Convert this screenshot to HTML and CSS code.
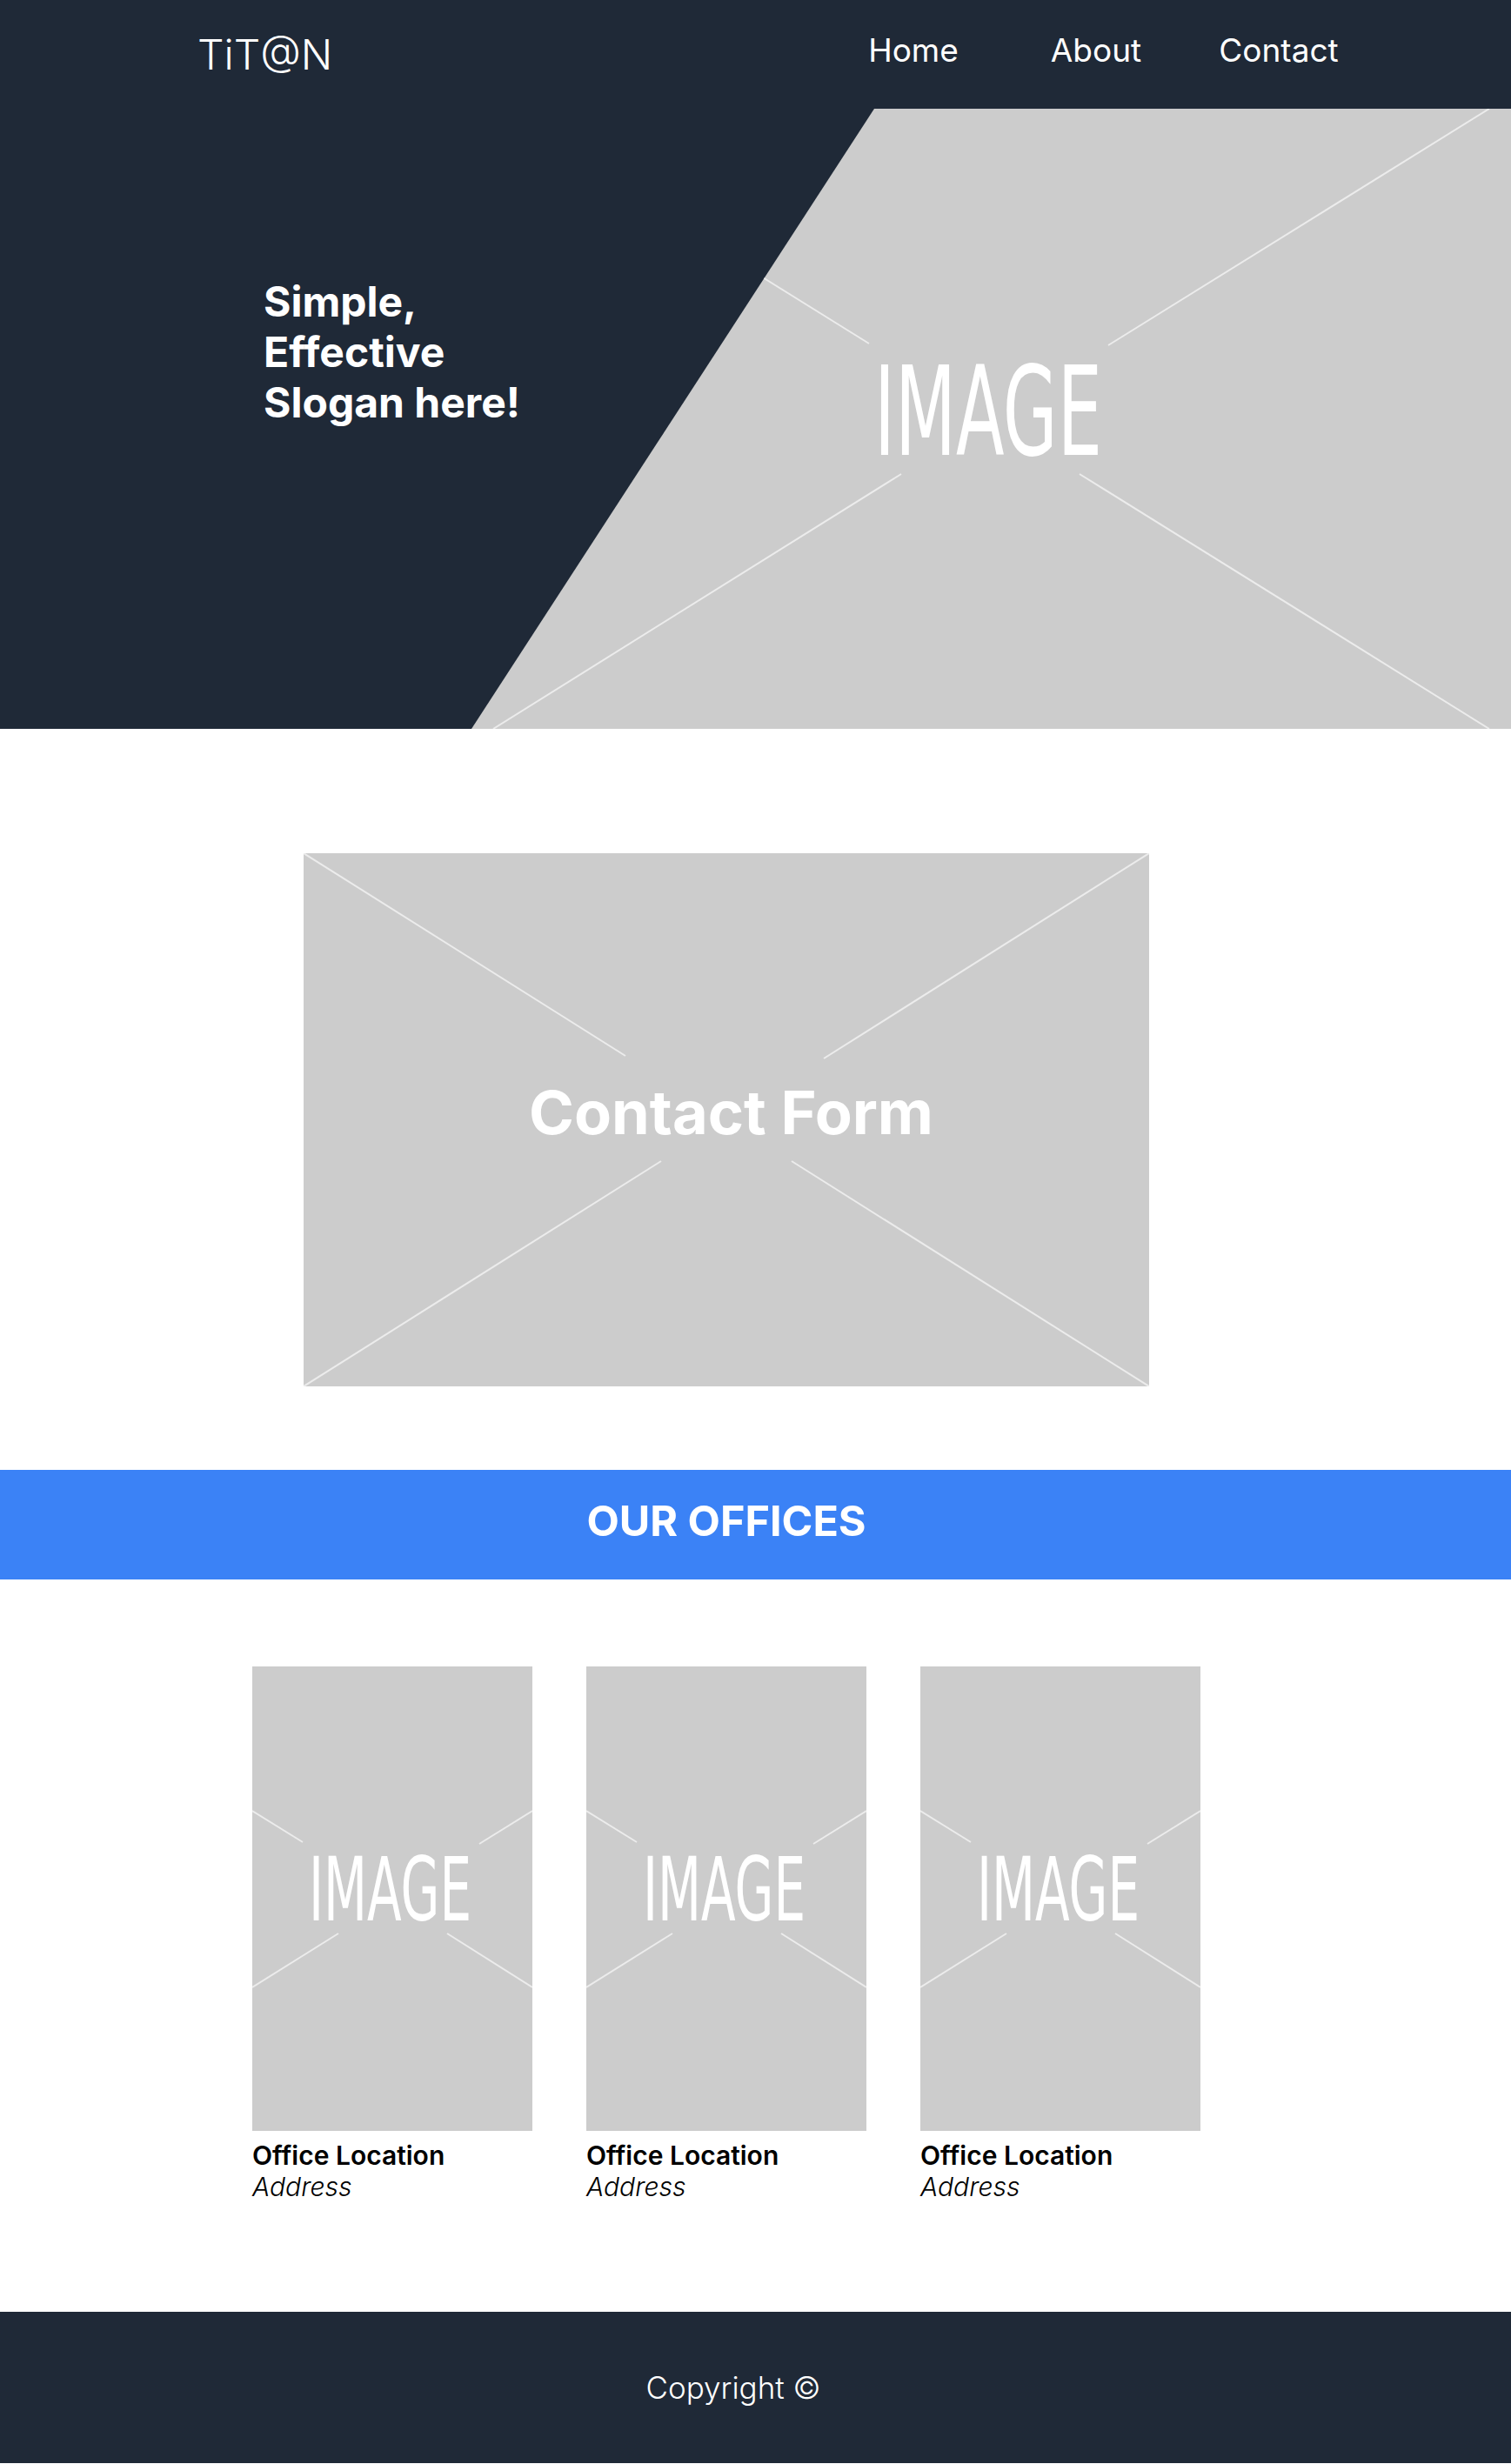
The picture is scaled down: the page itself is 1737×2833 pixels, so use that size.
FILE: index.html
```html
<!DOCTYPE html>
<html lang="en">
<head>
    <meta charset="UTF-8">
    <meta name="viewport" content="width=device-width, initial-scale=1.0">
    <title>TiT@N - Contact</title>
    <link rel="stylesheet" href="styles.css">
</head>
<body>
    <header class="topbar">
        <div class="logo">TiT@N</div>
        <nav class="nav">
            <a href="#">Home</a>
            <a href="#">About</a>
            <a href="#">Contact</a>
        </nav>
    </header>

    <section class="hero">
        <svg class="hero-art" width="1737" height="713" viewBox="0 0 1737 713">
            <defs>
                <clipPath id="heroClip">
                    <polygon points="1005,0 1737,0 1737,713 542,713" />
                </clipPath>
            </defs>
            <g clip-path="url(#heroClip)">
                <rect x="0" y="0" width="1737" height="713" class="ph-fill" />
                <line x1="565" y1="0" x2="999" y2="270" class="ph-line" />
                <line x1="1241" y1="420" x2="1712" y2="713" class="ph-line" />
                <line x1="1712" y1="0" x2="1274" y2="272" class="ph-line" />
                <line x1="1036" y1="420" x2="567" y2="713" class="ph-line" />
                <text transform="translate(1005 398) scale(1 1.47)" class="ph-word" font-size="97" textLength="262" lengthAdjust="spacingAndGlyphs">IMAGE</text>
            </g>
        </svg>
        <h1 class="slogan">Simple,<br>Effective<br>Slogan here!</h1>
    </section>

    <section class="contact wrap">
        <svg class="contact-form" width="972" height="613" viewBox="0 0 972 613">
            <rect x="0" y="0" width="972" height="613" class="ph-fill" />
            <line x1="0" y1="0" x2="370" y2="233" class="ph-line" />
            <line x1="561" y1="354" x2="972" y2="613" class="ph-line" />
            <line x1="972" y1="0" x2="598" y2="236" class="ph-line" />
            <line x1="411" y1="354" x2="0" y2="613" class="ph-line" />
            <text x="259" y="323" class="ph-title" font-size="69" textLength="465" lengthAdjust="spacingAndGlyphs">Contact Form</text>
        </svg>
    </section>

    <div class="band">
        <h2 class="band-title wrap">OUR OFFICES</h2>
    </div>

    <section class="offices wrap">
        <div class="office">
            <svg class="office-img" width="322" height="534" viewBox="0 0 322 534">
                <rect x="0" y="0" width="322" height="534" class="ph-fill" />
                <line x1="0" y1="166" x2="58" y2="202" class="ph-line" />
                <line x1="224" y1="307" x2="322" y2="369" class="ph-line" />
                <line x1="322" y1="166" x2="261" y2="204" class="ph-line" />
                <line x1="99" y1="307" x2="0" y2="369" class="ph-line" />
                <text transform="translate(65 292) scale(1 1.47)" class="ph-word" font-size="69" textLength="187" lengthAdjust="spacingAndGlyphs">IMAGE</text>
            </svg>
            <div class="office-name">Office Location</div>
            <div class="office-addr">Address</div>
        </div>
        <div class="office">
            <svg class="office-img" width="322" height="534" viewBox="0 0 322 534">
                <rect x="0" y="0" width="322" height="534" class="ph-fill" />
                <line x1="0" y1="166" x2="58" y2="202" class="ph-line" />
                <line x1="224" y1="307" x2="322" y2="369" class="ph-line" />
                <line x1="322" y1="166" x2="261" y2="204" class="ph-line" />
                <line x1="99" y1="307" x2="0" y2="369" class="ph-line" />
                <text transform="translate(65 292) scale(1 1.47)" class="ph-word" font-size="69" textLength="187" lengthAdjust="spacingAndGlyphs">IMAGE</text>
            </svg>
            <div class="office-name">Office Location</div>
            <div class="office-addr">Address</div>
        </div>
        <div class="office">
            <svg class="office-img" width="322" height="534" viewBox="0 0 322 534">
                <rect x="0" y="0" width="322" height="534" class="ph-fill" />
                <line x1="0" y1="166" x2="58" y2="202" class="ph-line" />
                <line x1="224" y1="307" x2="322" y2="369" class="ph-line" />
                <line x1="322" y1="166" x2="261" y2="204" class="ph-line" />
                <line x1="99" y1="307" x2="0" y2="369" class="ph-line" />
                <text transform="translate(65 292) scale(1 1.47)" class="ph-word" font-size="69" textLength="187" lengthAdjust="spacingAndGlyphs">IMAGE</text>
            </svg>
            <div class="office-name">Office Location</div>
            <div class="office-addr">Address</div>
        </div>
    </section>

    <footer class="footer">
        <p>Copyright &copy;</p>
    </footer>
</body>
</html>
```

FILE: styles.css
```css
body { margin: 0; font-family: Inter, "Noto Sans", sans-serif; color: #000; background: #fff; }
a { color: inherit; text-decoration: none; }

/* header */
.topbar { display: flex; align-items: center; justify-content: space-between; height: 125px; padding: 0 162px 0 227px; background: #1f2937; color: #fff; }
.logo { font-size: 48px; font-weight: 300; }
.nav { display: flex; padding-bottom: 11px; }
.nav a { width: 210px; text-align: center; font-size: 37px; font-weight: 400; }

/* hero */
.hero { display: grid; background: #1f2937; }
.hero-art, .slogan { grid-area: 1 / 1; }
.hero-art { display: block; }
.slogan { align-self: start; margin: 0; padding: 193px 0 0 303px; font-size: 48px; line-height: 58px; font-weight: 700; color: #fff; }

/* placeholder pictures */
.ph-fill { fill: #cccccc; }
.ph-line { stroke: #ececec; stroke-width: 2; }
.ph-word { fill: #fff; font-family: "Liberation Sans Narrow", "DejaVu Sans Condensed", sans-serif; font-weight: 400; }
.ph-title { fill: #fff; font-family: Inter, sans-serif; font-weight: 700; }

/* shifts the centre line to x=835 like the mockup */
.wrap { padding-right: 67px; }

.contact { display: flex; justify-content: center; padding-top: 143px; padding-bottom: 96px; }
.contact-form { display: block; }

.band { background: #3b82f6; height: 126px; display: flex; align-items: center; }
.band-title { flex: 1; margin: 0; padding-bottom: 9px; text-align: center; color: #fff; font-size: 48.5px; font-weight: 700; }

.offices { display: flex; justify-content: center; gap: 62px; padding-top: 100px; padding-bottom: 126px; }
.office { width: 322px; }
.office-img { display: block; }
.office-name { margin-top: 10px; font-size: 30px; line-height: 36px; font-weight: 600; }
.office-addr { font-size: 30px; line-height: 36px; font-weight: 300; font-style: italic; }

.footer { height: 174px; display: flex; align-items: center; justify-content: center; padding-right: 51px; background: #1f2937; color: #fff; }
.footer p { margin: 0; font-size: 35px; font-weight: 300; }
```
